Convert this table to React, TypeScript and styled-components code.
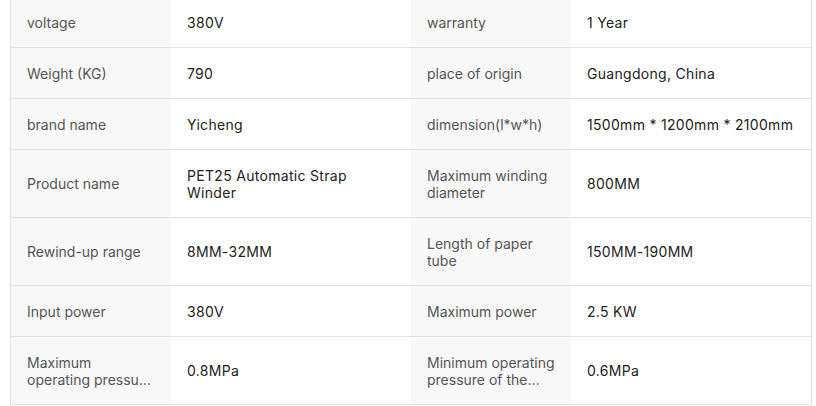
import React from "react";
import styled, { createGlobalStyle } from "styled-components";

const Global = createGlobalStyle`
  html, body { margin: 0; padding: 0; background: #ffffff; }
  body { font-family: Inter, "Noto Sans", sans-serif; overflow: hidden; }
`;

const Page = styled.div`
  padding: 0 0 0 10px;
  margin-top: -3px;
`;

const Table = styled.table`
  width: 802px;
  border-collapse: collapse;
  table-layout: fixed;
  border: 1px solid #e2e2e2;
  border-top: none;
`;

const Row = styled.tr`
  border-bottom: 1px solid #e2e2e2;
`;

const Label = styled.td`
  width: 128px;
  padding: 16.5px 16px;
  background: #f8f8f8;
  color: #555555;
  font-size: 14px;
  line-height: 17px;
  vertical-align: middle;
`;

const Clamp = styled.div`
  display: -webkit-box;
  -webkit-line-clamp: 2;
  -webkit-box-orient: vertical;
  overflow: hidden;
  text-overflow: ellipsis;
  word-break: break-word;
`;

const Value = styled.td`
  width: 208px;
  padding: 16.5px 16px;
  background: #ffffff;
  color: #222222;
  font-size: 14px;
  font-weight: 400;
  letter-spacing: 0.3px;
  line-height: 17px;
  vertical-align: middle;
`;

const rows: [string, string, string, string][] = [
  ["voltage", "380V", "warranty", "1 Year"],
  ["Weight (KG)", "790", "place of origin", "Guangdong, China"],
  ["brand name", "Yicheng", "dimension(l*w*h)", "1500mm * 1200mm * 2100mm"],
  ["Product name", "PET25 Automatic Strap Winder", "Maximum winding diameter", "800MM"],
  ["Rewind-up range", "8MM-32MM", "Length of paper tube", "150MM-190MM"],
  ["Input power", "380V", "Maximum power", "2.5 KW"],
  [
    "Maximum operating pressure of the air source",
    "0.8MPa",
    "Minimum operating pressure of the compressed air",
    "0.6MPa",
  ],
];

export default function App() {
  return (
    <>
      <Global />
      <Page>
        <Table>
          <tbody>
            {rows.map((r, i) => (
              <Row key={i}>
                <Label><Clamp>{r[0]}</Clamp></Label>
                <Value>{r[1]}</Value>
                <Label><Clamp>{r[2]}</Clamp></Label>
                <Value>{r[3]}</Value>
              </Row>
            ))}
          </tbody>
        </Table>
      </Page>
    </>
  );
}
